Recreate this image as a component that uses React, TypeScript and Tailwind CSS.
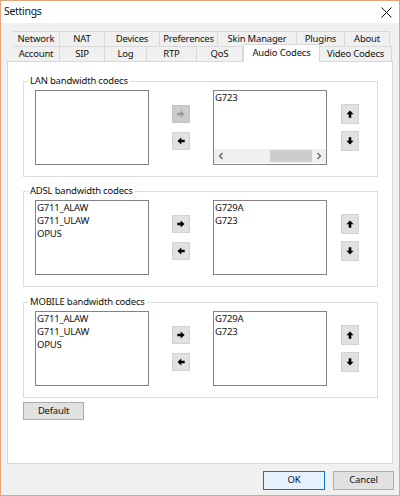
import React from 'react';

const font = "font-['Noto_Sans',sans-serif]";
const txt = 'text-[9.5px] tracking-[-0.2px]';

const row1 = [
    { label: 'Network', w: 'w-[47px]' },
    { label: 'NAT', w: 'w-[45px]' },
    { label: 'Devices', w: 'w-[55px]' },
    { label: 'Preferences', w: 'w-[58px]' },
    { label: 'Skin Manager', w: 'w-[79px]' },
    { label: 'Plugins', w: 'w-[48px]' },
    { label: 'About', w: 'w-[45px]' },
];

const row2 = [
    { label: 'Account', w: 'w-[47px]' },
    { label: 'SIP', w: 'w-[45px]' },
    { label: 'Log', w: 'w-[42px]' },
    { label: 'RTP', w: 'w-[50px]' },
    { label: 'QoS', w: 'w-[46px]' },
    { label: 'Audio Codecs', w: 'w-[77px]', active: true },
    { label: 'Video Codecs', w: 'w-[72px]' },
];

type Dir = 'right' | 'left' | 'up' | 'down';

const Arrow = ({ dir, color }: { dir: Dir; color: string }) => {
    const rot = { right: 0, down: 90, left: 180, up: 270 }[dir];
    return (
        <svg width="8" height="8" viewBox="0 0 8 8" style={{ transform: `rotate(${rot}deg)` }}>
            <path d="M0.3 2.7h3.4V0.4L7.6 4 3.7 7.6V5.3H0.3z" fill={color} />
        </svg>
    );
};

const ArrowBtn = ({ dir, disabled, tall }: { dir: Dir; disabled?: boolean; tall?: boolean }) => (
    <div
        className={`w-[18px] ${tall ? 'h-[20px]' : 'h-[18px]'} flex items-center justify-center border ${
            disabled ? 'bg-[#cccccc] border-[#c4c4c4]' : 'bg-[#e1e1e1] border-[#d2d2d2]'
        }`}
    >
        <Arrow dir={dir} color={disabled ? '#9a9a9a' : '#000'} />
    </div>
);

const ListBox = ({ items, scroll }: { items: string[]; scroll?: boolean }) => (
    <div className="w-[114px] h-[75px] border border-[#828282] bg-white flex flex-col">
        <div className="flex-1">
            {items.map((it) => (
                <div key={it} className={`px-[1px] leading-[13px] ${txt}`}>{it}</div>
            ))}
        </div>
        {scroll && (
            <div className="h-[14px] mb-px bg-[#f0f0f0] flex items-stretch">
                <div className="w-[14px] flex items-center justify-center">
                    <svg width="6" height="8" viewBox="0 0 6 8"><path d="M4.5 1 1.5 4l3 3" stroke="#606060" strokeWidth="1.3" fill="none" /></svg>
                </div>
                <div className="flex-1 flex justify-end py-[1px]">
                    <div className="w-[42px] bg-[#cdcdcd]" />
                </div>
                <div className="w-[14px] flex items-center justify-center">
                    <svg width="6" height="8" viewBox="0 0 6 8"><path d="M1.5 1l3 3-3 3" stroke="#606060" strokeWidth="1.3" fill="none" /></svg>
                </div>
            </div>
        )}
    </div>
);

const CodecGroup = ({
    title,
    left,
    right,
    scroll,
    disabledRight,
    className,
}: {
    title: string;
    left: string[];
    right: string[];
    scroll?: boolean;
    disabledRight?: boolean;
    className?: string;
}) => (
    <fieldset className={`w-[355px] border border-[#dcdcdc] ${className ?? ''}`}>
        <legend className={`ml-[4px] px-[2px] leading-[14px] ${txt}`}>{title}</legend>
        <div className="flex items-center pl-[11px] pt-[2px] pb-[11px]">
            <ListBox items={left} />
            <div className="ml-[23px] flex flex-col gap-[9px]">
                <ArrowBtn dir="right" disabled={disabledRight} />
                <ArrowBtn dir="left" />
            </div>
            <div className="ml-[23px]">
                <ListBox items={right} scroll={scroll} />
            </div>
            <div className="ml-[14px] flex flex-col gap-[7px]">
                <ArrowBtn dir="up" tall />
                <ArrowBtn dir="down" tall />
            </div>
        </div>
    </fieldset>
);

const Tab = ({ label, w, active }: { label: string; w: string; active?: boolean }) => (
    <div
        className={`${w} flex items-center justify-center ${txt} ${
            active
                ? 'h-[18px] -mb-px relative z-10 bg-white border-l border-t border-r border-[#d9d9d9]'
                : 'h-[15px] border-t border-r border-[#d9d9d9] bg-[#f0f0f0]'
        }`}
    >
        {label}
    </div>
);

const App = () => {
    return (
        <div className={`w-[400px] h-[496px] border border-[#e3a57a] flex flex-col text-[#111] ${font}`}>
            <div className="h-[22px] bg-white flex items-center justify-between pl-[3px] pr-[7px]">
                <span className="text-[10.5px] tracking-[-0.3px]">Settings</span>
                <svg width="11" height="11" viewBox="0 0 11 11">
                    <path d="M0.5 0.5l10 10M10.5 0.5l-10 10" stroke="#111" strokeWidth="1" />
                </svg>
            </div>

            <div className="flex-1 bg-[#f0f0f0] flex flex-col">
                <div className="pt-[8px] pl-[12px]">
                    <div className="flex h-[15px]">
                        {row1.map((t) => (
                            <Tab key={t.label} {...t} />
                        ))}
                    </div>
                    <div className="flex h-[15px] items-end">
                        {row2.map((t) => (
                            <Tab key={t.label} {...t} />
                        ))}
                    </div>
                </div>

                <div className="mx-[6px] flex-1 bg-white border border-[#d9d9d9] pl-[15px] pt-[12px]">
                    <CodecGroup title="LAN bandwidth codecs" left={[]} right={['G723']} scroll disabledRight />
                    <CodecGroup
                        className="mt-[7px]"
                        title="ADSL bandwidth codecs"
                        left={['G711_ALAW', 'G711_ULAW', 'OPUS']}
                        right={['G729A', 'G723']}
                    />
                    <CodecGroup
                        className="mt-[8px]"
                        title="MOBILE bandwidth codecs"
                        left={['G711_ALAW', 'G711_ULAW', 'OPUS']}
                        right={['G729A', 'G723']}
                    />
                    <button className={`mt-[4px] w-[61px] h-[18px] bg-[#e1e1e1] border border-[#adadad] ${txt} flex items-center justify-center`}>
                        Default
                    </button>
                </div>

                <div className="h-[31px] flex justify-end items-start pt-[7px] pr-[5px] gap-[8px]">
                    <button className={`w-[62px] h-[19px] bg-[#e5f1fb] border border-[#0078d7] ${txt} flex items-center justify-center`}>
                        OK
                    </button>
                    <button className={`w-[61px] h-[19px] bg-[#e1e1e1] border border-[#adadad] ${txt} flex items-center justify-center`}>
                        Cancel
                    </button>
                </div>
            </div>
        </div>
    );
};

export default App;
